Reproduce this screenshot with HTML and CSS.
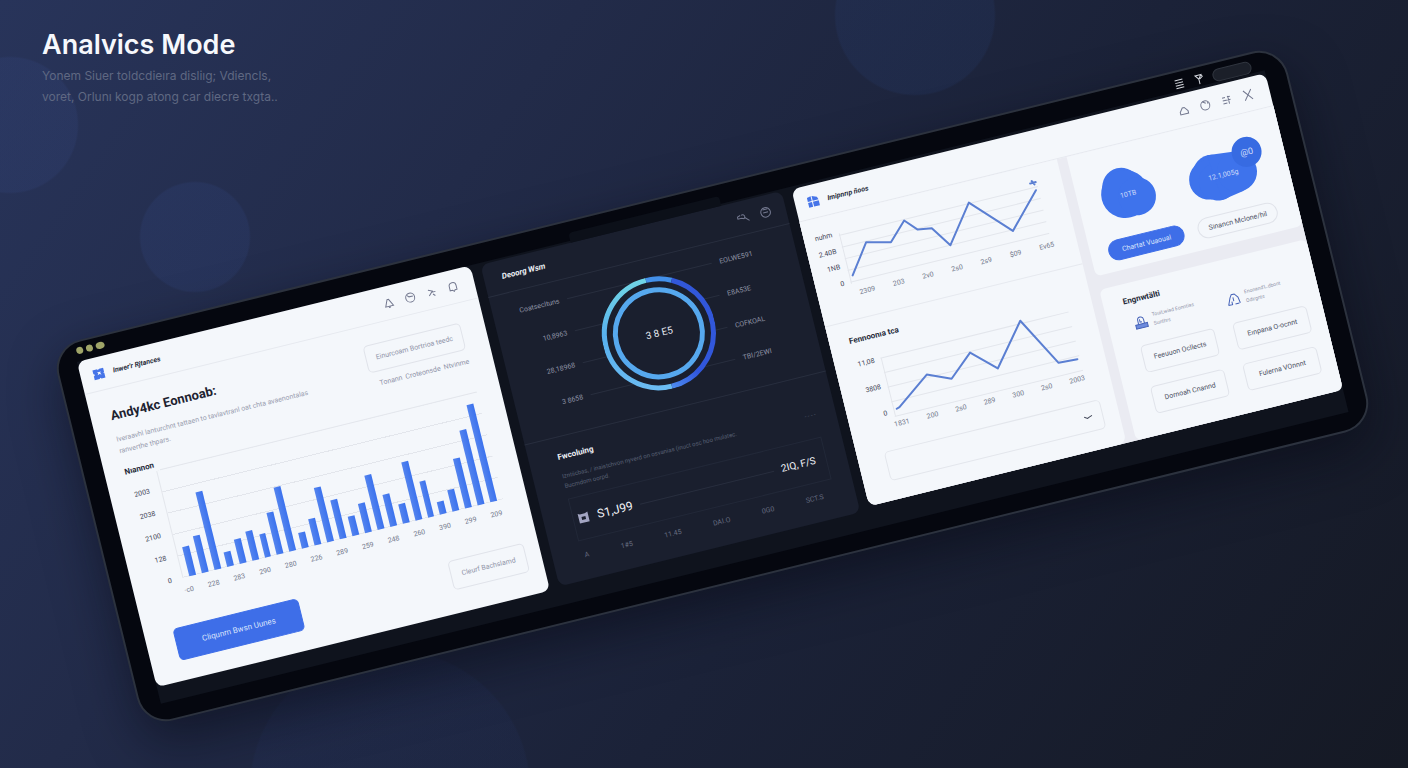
FILE: index.html
```html
<!DOCTYPE html>
<html lang="en">

<head>
    <meta charset="UTF-8" />
    <meta name="viewport" content="width=device-width, initial-scale=1.0" />
    <title>Analvics Mode</title>
    <link rel="stylesheet" href="styles.css">
</head>

<body>

    <header class="intro">
        <h1>Analvics Mode</h1>
        <p>Yonem Siuer toldcdieıra disliıg; Vdiencls,<br>voret, Orlunı kogp atong car diecre txgta..</p>
    </header>

    <main class="device">
        <div class="bezel">
            <div class="dots"><i></i><i></i><i></i></div>
            <div class="status">
                <svg width="12" height="12" viewBox="0 0 12 12"><path d="M2 2h8M2 4.700h8M2 7.300h8M2 10h8" /></svg>
                <svg width="12" height="12" viewBox="0 0 12 12"><path d="M3 2l6 0-3 4zM6 6v5M9 2l1 2-3 2" /></svg>
                <span class="camera"></span>
            </div>
        </div>

        <div class="screen">

            <!-- bar chart panel -->
            <section class="panel panel-light">
                <div class="panel-head">
                    <svg class="logo" width="13" height="13" viewBox="0 0 13 13"><path d="M1 2h5v1l2-1h4v4l-1 1h1v5H8l-1-1-1 1H1V8h1V6H1zM5 5l1 1-1 2 2-1 2 1-1-2 1-1-2 0z" /></svg>
                    <strong>Inwer'r Rjtances</strong>
                    <div class="icons">
                        <svg width="12" height="12" viewBox="0 0 12 12"><path d="M2 9.500L5 2.500h1.500L10 9.500zM5 10.500h2" /></svg>
                        <svg width="12" height="12" viewBox="0 0 12 12"><circle cx="6" cy="6" r="4.500" /><path d="M3 3l2 2h4" /></svg>
                        <svg width="12" height="12" viewBox="0 0 12 12"><path d="M3 3l4 2-4 4M6 6h4M7 8l2 2" /></svg>
                        <svg width="12" height="12" viewBox="0 0 12 12"><path d="M2.500 9V5a3.500 3.500 0 0 1 7 0v4l-2 0-1 1.500L5 9z" /></svg>
                    </div>
                </div>

                <div class="overview">
                    <div class="summary">
                        <div>
                            <h2>Andy4kc Eonnoab:</h2>
                            <p>Iveraavhl lanturchnt tattaen to tavlavtranl oat chta avaenontalas<br>ranverthe thpars.</p>
                        </div>
                        <div class="summary-side">
                            <button class="btn">Einurcoam Bortrioa teedc</button>
                            <nav>
                                <a href="#">Tonann</a>
                                <a href="#">Croteonsde</a>
                                <a href="#">Ntvinme</a>
                            </nav>
                        </div>
                    </div>

                    <div class="chart-title">
                        <h3>Nıannon</h3>
                        <hr>
                    </div>
                    <div class="bar-chart">
                        <div class="y-axis">
                            <span>2003</span><span>2038</span><span>2100</span><span>128</span><span>0</span>
                        </div>
                        <div class="bars">
                            <i style="height: 27%"></i>
                            <i style="height: 35%"></i>
                            <i style="height: 73%"></i>
                            <i style="height: 14%"></i>
                            <i style="height: 23%"></i>
                            <i style="height: 27%"></i>
                            <i style="height: 22%"></i>
                            <i style="height: 39%"></i>
                            <i style="height: 60%"></i>
                            <i style="height: 15%"></i>
                            <i style="height: 25%"></i>
                            <i style="height: 51%"></i>
                            <i style="height: 36%"></i>
                            <i style="height: 18%"></i>
                            <i style="height: 27%"></i>
                            <i style="height: 51%"></i>
                            <i style="height: 30%"></i>
                            <i style="height: 18%"></i>
                            <i style="height: 55%"></i>
                            <i style="height: 34%"></i>
                            <i style="height: 12%"></i>
                            <i style="height: 20%"></i>
                            <i style="height: 46%"></i>
                            <i style="height: 70%"></i>
                            <i style="height: 91%"></i>
                        </div>
                    </div>
                    <div class="x-axis bar-axis">
                        <span>·c0</span><span>228</span><span>283</span><span>290</span><span>280</span><span>226</span><span>289</span><span>259</span><span>248</span><span>260</span><span>390</span><span>299</span><span>209</span>
                    </div>

                    <div class="actions">
                        <button class="btn btn-primary">Cliqunrn Bwsn Uunes</button>
                        <button class="btn btn-ghost">Cleurf Bachslamd</button>
                    </div>
                </div>
            </section>

            <!-- dark panel -->
            <section class="panel panel-dark">
                <div class="panel-head">
                    <strong>Deoorg Wsm</strong>
                    <div class="icons">
                        <svg width="13" height="12" viewBox="0 0 13 12"><path d="M4 3L1 4v2h4M5 3a2 2 0 1 1 2 4l-2-1M8 6l4 4" /></svg>
                        <svg width="13" height="12" viewBox="0 0 13 12"><circle cx="6.500" cy="6" r="4.800" /><path d="M4 6h5M4 3h5" /></svg>
                    </div>
                </div>

                <div class="gauge">
                    <ul>
                        <li><span>Coatsecltuns</span><hr><span>EOLWE591</span></li>
                        <li><span>10,8963</span><hr><span>E8A53E</span></li>
                        <li><span>28,18968</span><hr><span>COFKOAL</span></li>
                        <li><span>3 8658</span><hr><span>TBI/2EWI</span></li>
                    </ul>
                    <div class="ring">
                        <svg width="114" height="114" viewBox="0 0 114 114">
                            <defs>
                                <linearGradient id="ringLeft" x1="0" y1="0" x2="0" y2="1">
                                    <stop offset="0" stop-color="#6fd3e6" />
                                    <stop offset="0.4" stop-color="#58b0ee" />
                                    <stop offset="1" stop-color="#6cbcf2" />
                                </linearGradient>
                                <linearGradient id="ringRight" x1="1" y1="0" x2="0" y2="1">
                                    <stop offset="0" stop-color="#3257d8" />
                                    <stop offset="0.7" stop-color="#3157dd" />
                                    <stop offset="1" stop-color="#4d8bf0" />
                                </linearGradient>
                            </defs>
                            <circle class="ring-face" cx="57" cy="57" r="55" />
                            <path d="M57 111.500A54.500 54.500 0 0 1 57 2.500" stroke="url(#ringLeft)" />
                            <path d="M57 2.500A54.500 54.500 0 0 1 82 8.500" stroke="#4390ea" />
                            <path d="M82 8.500A54.500 54.500 0 0 1 57 111.500" stroke="url(#ringRight)" />
                            <circle cx="57" cy="57" r="43.500" stroke="#56a8ee" />
                        </svg>
                        <b>3 8 E5</b>
                    </div>
                </div>

                <div class="focus">
                    <h3>Fwcoluing</h3>
                    <div class="focus-text">
                        <p>Izntiicbas, / inaistchvon nyverd on osvanias (inuct osc hoo mulatec.<br>Bucmdom oorpd.</p>
                        <span>- - - -</span>
                    </div>
                    <div class="total">
                        <svg width="12" height="12" viewBox="0 0 12 12"><path d="M1 1l2 1h5l3-1v10H1zM4 5v3h4V5z" /></svg>
                        <b>S1,J99</b>
                        <hr>
                        <b class="total-end">2IQ, F/S</b>
                    </div>
                    <div class="x-axis">
                        <span>A</span><span>1#5</span><span>11.45</span><span>DAI.O</span><span>0G0</span><span>SCT.S</span>
                    </div>
                </div>
            </section>

            <!-- line charts and side cards -->
            <section class="panel panel-light panel-wide">
                <div class="panel-head">
                    <svg class="logo" width="13" height="13" viewBox="0 0 13 13"><path d="M1 2l4-1v5H1zM6 1l5 2 1 3H6zM1 7h4v5H1zM6 7h6v5H6z" /></svg>
                    <strong>Imipnrıp ñoos</strong>
                    <div class="icons">
                        <svg width="12" height="12" viewBox="0 0 12 12"><path d="M2 9.500V7l3-4 2 0 3 4v2.500z" /></svg>
                        <svg width="12" height="12" viewBox="0 0 12 12"><circle cx="6" cy="6" r="4.500" /><path d="M4 2l3 2M9 3v2" /></svg>
                        <svg width="12" height="12" viewBox="0 0 12 12"><path d="M2 3h3M7 3h3M2 6h8M2 9h4M8 2v8" /></svg>
                        <svg width="12" height="12" viewBox="0 0 12 12"><path d="M2 1l8 10M10 1L2 11" /></svg>
                    </div>
                </div>

                <div class="columns">
                    <div class="trends">
                        <div class="trend trend-first">
                            <div class="line-chart">
                                <div class="y-axis"><span>nuhm</span><span>2.40B</span><span>1NB</span><span>0</span></div>
                                <svg height="58" viewBox="0 0 205 58" preserveAspectRatio="none">
                                    <path class="grid" d="M0 8H205M0 20H205M0 32H205M0 44H205M0 56H205M1 6V58" />
                                    <path class="line" d="M4 50L25 21L49 27L67 9L78 21L92 23L106 44L134 7L170 45L202 11" />
                                    <path class="line" d="M198 3h6M200 1l2 4" />
                                </svg>
                            </div>
                            <div class="x-axis"><span>2309</span><span>203</span><span>2v0</span><span>2s0</span><span>2s9</span><span>$09</span><span>Ev65</span></div>
                        </div>
                        <div class="trend trend-second">
                            <h3>Fennoonıa tca</h3>
                            <div class="line-chart">
                                <div class="y-axis"><span>11,08</span><span>3808</span><span>0</span></div>
                                <svg height="66" viewBox="0 0 193 66" preserveAspectRatio="none">
                                    <path class="grid" d="M0 5H193M0 20H193M0 35H193M0 50H193M0 65H193M1 5V65" />
                                    <path class="line" d="M4 58L7 57L41 32L64 42L88 21L111 43L144 2L171 52L190 53" />
                                </svg>
                            </div>
                            <div class="x-axis"><span>1831</span><span>200</span><span>2s0</span><span>289</span><span>300</span><span>2s0</span><span>2003</span></div>
                            <div class="picker">
                                <select aria-label="Period"><option></option></select>
                                <svg width="10" height="6" viewBox="0 0 10 6"><path d="M1 2l3 2 2-1 3-1" /></svg>
                            </div>
                        </div>
                    </div>

                    <div class="side">
                        <div class="card stats">
                            <svg width="64" height="60" viewBox="0 0 64 60">
                                <circle cx="28" cy="22" r="19" />
                                <circle cx="30" cy="30" r="24" />
                                <circle cx="41" cy="35" r="19" />
                                <text x="33" y="33">10TB</text>
                            </svg>
                            <svg width="84" height="60" viewBox="0 0 84 60">
                                <circle cx="27" cy="31" r="19" />
                                <circle cx="23" cy="36" r="20" />
                                <circle cx="31" cy="40" r="19" />
                                <path d="M27 12L56 15L54 55L31 59z" />
                                <circle cx="52" cy="35" r="20" />
                                <circle class="badge" cx="66" cy="18" r="15" />
                                <text x="38" y="37">12.1,005g</text>
                                <text class="badge-text" x="66" y="21">@0</text>
                            </svg>
                            <button class="btn btn-primary pill">Chartat Vuaoual</button>
                            <button class="btn pill">Sinancn Mclone/hil</button>
                        </div>
                        <div class="card tools">
                            <h3>Engnwtälti</h3>
                            <div class="tools-grid">
                                <div class="tool">
                                    <svg width="14" height="14" viewBox="0 0 14 14"><path class="solid" d="M1 9h12v4H1z" /><path d="M4 9V5a3 3 0 0 1 6 0v4M6 4v3h2" /></svg>
                                    <p>Touit,wiad Eonntias<br>Sunthrs</p>
                                </div>
                                <div class="tool">
                                    <svg width="14" height="14" viewBox="0 0 14 14"><path d="M1 12h4V9M12 12H8M1 12l3-7 2-3h3l3 4 1 6M7 5v4" /></svg>
                                    <p>Enonand'L.dbont<br>Odirgnts</p>
                                </div>
                                <button class="btn">Feeuuon Ocllects</button>
                                <button class="btn">Eınpana O-ocnnt</button>
                                <button class="btn">Dornoah Cnannd</button>
                                <button class="btn">Fulerna VOnnnt</button>
                            </div>
                        </div>
                    </div>
                </div>
            </section>

        </div>
    </main>

</body>

</html>
```

FILE: styles.css
```css
* {
    box-sizing: border-box;
}

body {
    margin: 0;
    min-height: 100vh;
    display: grid;
    overflow: hidden;
    font-family: Inter, "Liberation Sans", sans-serif;
    background:
        radial-gradient(circle at 10px 125px, rgba(66, 90, 165, 0.12) 67px, transparent 69px),
        radial-gradient(circle at 195px 237px, rgba(66, 100, 190, 0.10) 54px, transparent 56px),
        radial-gradient(circle at 915px 15px, rgba(50, 90, 170, 0.10) 79px, transparent 81px),
        radial-gradient(circle at 390px 790px, rgba(50, 80, 170, 0.06) 139px, transparent 141px),
        linear-gradient(125deg, #28345a 0%, #222b49 30%, #1b2238 60%, #151924 100%);
}

h1,
h2,
h3,
p,
ul {
    margin: 0;
    padding: 0;
}

hr {
    flex: 1;
    margin: 0;
    border: 0;
    border-top: 1px solid #e3e6ec;
}

svg {
    fill: none;
    stroke: currentColor;
}

/* intro and device share one cell so the text can sit over the artwork */
.intro,
.device {
    grid-area: 1 / 1;
}

.intro {
    align-self: start;
    padding: 27px 42px;
    color: #5f6882;
    font-size: 12px;
    line-height: 21px;
}

.intro h1 {
    margin-bottom: 2px;
    color: #f6f8fc;
    font-size: 27px;
    font-weight: 600;
    line-height: 36px;
}

/* device */
.device {
    place-self: center;
    width: 90%;
    margin: 4px 0 0 18px;
    padding: 0 20px 17px;
    border: 2px solid #2c323e;
    border-radius: 30px;
    background: #05070f;
    box-shadow: 0 20px 50px rgba(5, 8, 18, 0.5);
    transform: rotate(-13.8deg);
    color: #3f4456;
    font-family: Roboto, "Liberation Sans", sans-serif;
    font-size: 8px;
    line-height: 12px;
}

.bezel {
    display: flex;
    justify-content: space-between;
    height: 19px;
}

.dots {
    display: flex;
    align-items: center;
    gap: 3px;
    height: 16px;
    padding-left: 2px;
}

.dots i {
    width: 7px;
    height: 7px;
    border-radius: 50%;
    background: #9fa468;
}

.dots i:last-child {
    width: 9px;
}

.status {
    display: flex;
    align-items: center;
    gap: 8px;
    height: 24px;
    margin-right: 12px;
    color: #d5d8df;
}

.camera {
    width: 40px;
    height: 13px;
    border: 1px solid #30353f;
    border-radius: 7px;
    background: #1b1f29;
}

.screen {
    display: grid;
    grid-template-columns: 404fr 309fr 487fr;
    gap: 10px;
    padding-bottom: 17px;
    background: #0f131d;
}

.panel {
    display: flex;
    flex-direction: column;
    border-radius: 8px;
}

.panel-light {
    background: #f4f7fb;
}

.panel-dark {
    position: relative;
    margin: 2px 0;
    background: #1a1f2e;
    color: #9095a6;
}

/* notch above the dark panel */
.panel-dark::before {
    content: "";
    position: absolute;
    top: -10px;
    left: 30%;
    width: 50%;
    height: 10px;
    border-radius: 4px 4px 0 0;
    background: #0c1019;
}

.panel-wide {
    margin: 3px 0 6px;
}

.panel-head {
    display: flex;
    align-items: center;
    gap: 8px;
    height: 34px;
    padding: 0 20px 0 12px;
    border-bottom: 1px solid #e6e9ef;
}

.icons {
    display: flex;
    gap: 10px;
    margin-left: auto;
    color: #747990;
}

.logo {
    fill: #4674e8;
    fill-rule: evenodd;
    stroke: none;
}

h3,
strong {
    color: #262b3a;
    font-size: 8px;
    font-weight: 700;
    line-height: 12px;
}

strong {
    font-size: 7px;
    font-style: italic;
}

.btn {
    height: 28px;
    padding: 0;
    border: 1px solid #e0e3ea;
    border-radius: 5px;
    background: transparent;
    color: #4a4f62;
    font-family: inherit;
    font-size: 7px;
    cursor: pointer;
}

.btn-primary {
    border-color: #3e6ee8;
    background: #3e6ee8;
    color: #dbe5fc;
}

.x-axis {
    display: flex;
    justify-content: space-between;
    color: #73788b;
    font-size: 7px;
}

.y-axis {
    display: flex;
    flex-direction: column;
    justify-content: space-between;
    align-items: flex-end;
    font-size: 7px;
}

/* bar chart panel */
.panel-light .icons {
    margin-right: -4px;
}

.overview {
    padding: 19px 24px 19px 20px;
}

.summary {
    display: flex;
    justify-content: space-between;
    color: #9a9eb0;
    font-size: 7px;
}

.summary h2 {
    margin-bottom: 10px;
    color: #1d2230;
    font-size: 13px;
    line-height: 16px;
}

.summary .btn {
    width: 100px;
    color: #8f93a8;
}

.summary nav {
    display: flex;
    justify-content: space-between;
    width: 92px;
    margin: 6px 0 0 8px;
}

.summary a {
    color: #8f93a8;
    text-decoration: none;
}

.chart-title {
    display: flex;
    align-items: flex-end;
    gap: 5px;
    margin-top: 10px;
}

.bar-chart {
    display: grid;
    grid-template-columns: 20px 1fr;
    gap: 11px;
}

.bar-chart .y-axis {
    margin: 12px 0 -6px;
}

.bars {
    display: flex;
    align-items: flex-end;
    gap: 6px;
    height: 110px;
    padding: 0 6px 0 6px;
    border-left: 1px solid #e3e6ec;
    background: repeating-linear-gradient(to top, #e3e6ec 0 1px, transparent 1px 22px);
}

.bars i {
    flex: 1;
    background: linear-gradient(to right, #5484ee, #3b72ee);
}

.bar-axis {
    margin: 7px 4px 0 30px;
}

.actions {
    display: flex;
    justify-content: space-between;
    margin: 28px -9px 0 9px;
}

.actions .btn-primary {
    width: 129px;
    height: 33px;
    font-size: 8px;
}

.btn-ghost {
    width: 78px;
    height: 30px;
    color: #8f93a8;
}

/* dark panel */
.panel-dark hr,
.panel-dark .panel-head {
    border-color: #282e3e;
}

.panel-dark .panel-head {
    padding: 0 14px 0 18px;
}

.panel-dark h3,
.panel-dark strong {
    color: #eef1f6;
}

.panel-dark strong {
    font-size: 8px;
}

.gauge {
    display: grid;
    height: 151px;
    padding-left: 5px;
}

.gauge ul,
.ring {
    grid-area: 1 / 1;
}

.gauge ul {
    padding-top: 3px;
    font-size: 7px;
    list-style: none;
}

.gauge li {
    display: flex;
    align-items: center;
    gap: 8px;
    height: 33px;
}

.gauge li span:first-child {
    width: 63px;
    text-align: right;
}

.gauge li span:last-child {
    width: 77px;
}

.ring {
    display: grid;
    place-items: center;
    align-self: start;
    justify-self: center;
    margin-top: 18px;
}

.ring svg,
.ring b {
    grid-area: 1 / 1;
    stroke-width: 5;
}

.ring b {
    color: #e4e8f0;
    font-size: 10px;
    font-weight: 400;
}

.ring-face {
    fill: #1a1f2e;
    stroke: none;
}

.focus {
    padding: 14px 20px 0 29px;
    border-top: 1px solid #282e3e;
}

.focus-text {
    display: flex;
    justify-content: space-between;
    margin: 8px 0;
    color: #596074;
    font-size: 6px;
    line-height: 10px;
    white-space: nowrap;
}

.total {
    display: flex;
    align-items: center;
    gap: 8px;
    height: 44px;
    margin-bottom: 9px;
    padding: 0 10px 0 4px;
    border: 1px solid #222838;
}

.total svg {
    fill: #a3a5c2;
    fill-rule: evenodd;
    stroke: none;
}

.total b {
    color: #f2f4f8;
    font-size: 12px;
    font-weight: 400;
}

.total .total-end {
    font-size: 10px;
}

.focus .x-axis {
    padding: 0 12px 0 3px;
    color: #666c80;
}

/* line charts */
.columns {
    flex: 1;
    display: grid;
    grid-template-columns: 264fr 211fr;
    gap: 10px;
    background: #eaebf2;
    border-radius: 0 0 8px 8px;
}

.trends {
    border-radius: 0 0 8px 8px;
    background: #f4f7fb;
}

.trend {
    padding: 14px 25px 19px 9px;
}

.trend-first {
    border-bottom: 1px solid #e6e9ef;
}

.trend-second {
    padding-left: 20px;
}

.trend-second h3 {
    margin-bottom: 12px;
}

.line-chart {
    display: grid;
    grid-template-columns: 20px 1fr;
    gap: 6px;
    height: 62px;
}

.line-chart svg {
    width: 100%;
}

.grid {
    stroke: #e3e6ec;
}

.line {
    stroke: #5b7fd2;
    stroke-width: 2;
    stroke-linejoin: round;
    stroke-linecap: round;
}

.trend .x-axis {
    margin: 0 -2px 0 33px;
}

.trend-second .x-axis {
    margin: 5px 0 0 24px;
}

.picker {
    display: grid;
    align-items: center;
    margin: 18px -9px 0 7px;
}

.picker select,
.picker svg {
    grid-area: 1 / 1;
}

.picker select {
    width: 100%;
    height: 30px;
    border: 1px solid #e3e6ec;
    border-radius: 5px;
    background: transparent;
    appearance: none;
}

.picker svg {
    justify-self: end;
    margin-right: 10px;
    pointer-events: none;
}

/* side cards */
.side {
    display: grid;
    grid-template-rows: auto 1fr;
    gap: 14px;
}

.card {
    border-radius: 0 0 6px 6px;
    background: #f4f7fb;
}

.stats {
    display: grid;
    grid-template-columns: 78px 82px;
    gap: 12px 14px;
    padding: 20px 18px 10px;
}

.stats svg {
    fill: #3e73ec;
    stroke: none;
}

.stats text {
    fill: #cfdcfb;
    font-size: 7px;
    text-anchor: middle;
}

.stats .badge {
    fill: #376be2;
}

.stats .badge-text {
    font-size: 9px;
}

.pill {
    height: 21px;
    border-radius: 11px;
}

.tools {
    padding: 12px 16px 0 20px;
    border-radius: 6px;
}

.tools-grid {
    display: grid;
    grid-template-columns: 76px 76px;
    gap: 14px 19px;
    margin: 8px 0 0 6px;
}

.tool {
    display: flex;
    align-items: center;
    gap: 5px;
    color: #4562b8;
}

.tool .solid {
    fill: #6d8bdd;
}

.tool p {
    color: #8f93a8;
    font-size: 5px;
    line-height: 9px;
    white-space: nowrap;
}
```
